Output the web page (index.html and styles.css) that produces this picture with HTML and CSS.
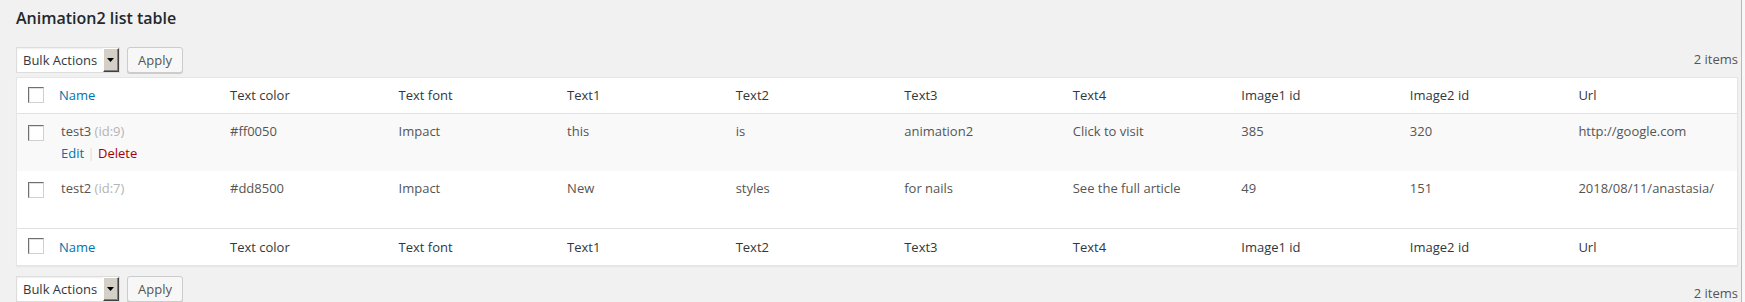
FILE: index.html
```html
<!DOCTYPE html>
<html lang="en">
<head>
<meta charset="utf-8">
<title>Animation2 list table</title>
<link rel="stylesheet" href="styles.css">
</head>
<body>
<div class="page">
  <main class="wrap">
    <h2 class="title">Animation2 list table</h2>

    <div class="tablenav top">
      <div class="select">
        <span class="select-label">Bulk Actions</span>
        <span class="select-arrow"><svg width="7" height="4" viewBox="0 0 7 4"><path d="M0 0H7L3.5 4Z" fill="#000"/></svg></span>
      </div>
      <button class="button" type="button">Apply</button>
      <span class="num top-num">2 items</span>
    </div>

    <table class="list">
      <colgroup>
        <col class="c-check"><col class="c-name"><col><col><col><col><col><col><col><col><col>
      </colgroup>
      <thead>
        <tr>
          <th class="check"><input type="checkbox" class="cb"></th>
          <th><a class="link">Name</a></th>
          <th>Text color</th>
          <th>Text font</th>
          <th>Text1</th>
          <th>Text2</th>
          <th>Text3</th>
          <th>Text4</th>
          <th>Image1 id</th>
          <th>Image2 id</th>
          <th>Url</th>
        </tr>
      </thead>
      <tbody>
        <tr class="alt">
          <td class="check"><input type="checkbox" class="cb"></td>
          <td class="primary">test3 <span class="id">(id:9)</span>
            <div class="row-actions"><a class="link">Edit</a> <span class="sep">|</span> <a class="delete">Delete</a></div>
          </td>
          <td>#ff0050</td>
          <td>Impact</td>
          <td>this</td>
          <td>is</td>
          <td>animation2</td>
          <td>Click to visit</td>
          <td>385</td>
          <td>320</td>
          <td>http://google.com</td>
        </tr>
        <tr>
          <td class="check"><input type="checkbox" class="cb"></td>
          <td class="primary">test2 <span class="id">(id:7)</span>
            <div class="row-actions hidden"><a class="link">Edit</a> <span class="sep">|</span> <a class="delete">Delete</a></div>
          </td>
          <td>#dd8500</td>
          <td>Impact</td>
          <td>New</td>
          <td>styles</td>
          <td>for nails</td>
          <td>See the full article</td>
          <td>49</td>
          <td>151</td>
          <td>2018/08/11/anastasia/</td>
        </tr>
      </tbody>
      <tfoot>
        <tr>
          <th class="check"><input type="checkbox" class="cb"></th>
          <th><a class="link">Name</a></th>
          <th>Text color</th>
          <th>Text font</th>
          <th>Text1</th>
          <th>Text2</th>
          <th>Text3</th>
          <th>Text4</th>
          <th>Image1 id</th>
          <th>Image2 id</th>
          <th>Url</th>
        </tr>
      </tfoot>
    </table>

    <div class="tablenav bottom">
      <div class="select">
        <span class="select-label">Bulk Actions</span>
        <span class="select-arrow"><svg width="7" height="4" viewBox="0 0 7 4"><path d="M0 0H7L3.5 4Z" fill="#000"/></svg></span>
      </div>
      <button class="button" type="button">Apply</button>
      <span class="num bottom-num">2 items</span>
    </div>
  </main>
  <div class="edge"></div>
  <div class="edge-pad"></div>
</div>
</body>
</html>
```

FILE: styles.css
```css
html, body {
  margin: 0;
  padding: 0;
  height: 302px;
  overflow: hidden;
  background: #f1f1f1;
}
body {
  font-family: "Open Sans", "Noto Sans", sans-serif;
  font-size: 13px;
  color: #444;
}
.page {
  display: flex;
  height: 302px;
}
.wrap {
  flex: 1;
  min-width: 0;
  padding: 0 3px 0 16px;
}
.edge {
  width: 1px;
  background: #b9b9b9;
}
.edge-pad {
  width: 3px;
  background: #f7f7f7;
}
.title {
  margin: 7px 0 0;
  font-size: 16px;
  line-height: 22px;
  font-weight: 600;
  color: #23282d;
}
.tablenav {
  display: flex;
  align-items: center;
  height: 26px;
  gap: 7px;
}
.tablenav.top {
  margin: 18px 0 4px;
}
.tablenav.bottom {
  margin: 10px 0 0;
}
.select {
  display: flex;
  align-items: stretch;
  width: 104px;
  height: 26px;
  box-sizing: border-box;
  background: #fff;
  border: 1px solid #ddd;
  box-shadow: inset 0 1px 2px rgba(0, 0, 0, .07);
}
.select-label {
  flex: 1;
  padding-left: 6px;
  line-height: 24px;
  color: #32373c;
  white-space: nowrap;
}
.select-arrow {
  width: 16px;
  box-sizing: border-box;
  display: flex;
  align-items: center;
  justify-content: center;
  background: #d4d0c8;
  border-top: 1px solid #fff;
  border-left: 1px solid #fff;
  border-right: 1px solid #404040;
  border-bottom: 1px solid #404040;
  box-shadow: inset -1px -1px 0 #808080;
  padding-right: 1px;
}
.select-arrow svg {
  display: block;
}
.button {
  height: 26px;
  padding: 0 10px;
  font-family: inherit;
  font-size: 13px;
  line-height: 24px;
  color: #555;
  background: #f7f7f7;
  border: 1px solid #ccc;
  border-radius: 3px;
  box-shadow: 0 1px 0 #ccc;
  cursor: pointer;
}
.num {
  margin-left: auto;
  color: #555;
  line-height: 19.5px;
}
.bottom-num {
  align-self: flex-start;
  margin-top: 8px;
}
.list {
  width: 100%;
  table-layout: fixed;
  border-collapse: separate;
  border-spacing: 0;
  background: #fff;
  border: 1px solid #e5e5e5;
  box-shadow: 0 1px 1px rgba(0, 0, 0, .04);
}
.c-check { width: 32px; }
.c-name { width: 171px; }
.list th, .list td {
  text-align: left;
  font-weight: 400;
  padding: 8px 10px;
  vertical-align: top;
  white-space: nowrap;
  overflow: hidden;
}
.list thead th {
  line-height: 19px;
  color: #32373c;
  border-bottom: 1px solid #e1e1e1;
}
.list tfoot th {
  line-height: 20px;
  color: #32373c;
  border-top: 1px solid #e1e1e1;
}
.list td {
  line-height: 19.5px;
  color: #555;
}
.list td.primary {
  padding-left: 12px;
}
.list tr.alt td {
  background: #f9f9f9;
}
.list .check {
  padding: 9px 0 0 11px;
}
.list td.check {
  padding-top: 11px;
}
.cb {
  appearance: none;
  -webkit-appearance: none;
  display: block;
  margin: 0;
  width: 16px;
  height: 16px;
  box-sizing: border-box;
  background: #fff;
  border: 1px solid;
  border-color: #6f6f6f #d0d0d0 #d0d0d0 #6f6f6f;
  box-shadow: inset 1px 1px 0 #e0e0e0;
}
.link {
  color: #0073aa;
  text-decoration: none;
}
.delete {
  color: #a00;
}
.id {
  color: #b4b4b4;
}
.row-actions {
  padding-top: 2px;
}
.row-actions.hidden {
  visibility: hidden;
}
.sep {
  color: #ddd;
}
```
